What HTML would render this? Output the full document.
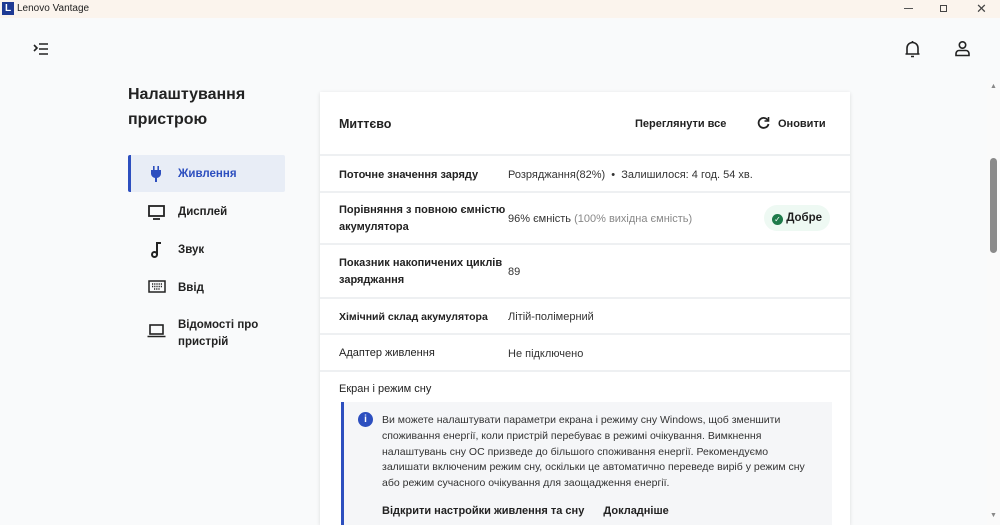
<!DOCTYPE html>
<html style="width:1000px;height:525px;overflow:hidden"><head><meta charset="utf-8"><style>
*{margin:0;padding:0;box-sizing:border-box}
body{width:1000px;height:525px;overflow:hidden;background:#f9fafb;font-family:"Liberation Sans","DejaVu Sans",sans-serif;color:#1f1f1f;position:relative}
.tb{position:absolute;top:0;left:0;width:1000px;height:18px;background:#fbf4ed;font-size:10px}
.abs{position:absolute}
.card{position:absolute;left:320px;top:92px;width:530px;height:433px;background:#fff;box-shadow:0 1px 4px rgba(0,0,0,.12);overflow:hidden}
.row{position:absolute;left:0;width:530px;border-top:2px solid #eef0f2;font-size:11px}
.lab{position:absolute;left:19px;font-weight:bold;color:#222;line-height:17px;font-size:11px}
.val{position:absolute;left:188px;color:#333}
.nav{position:absolute;left:150px;font-size:11.5px;font-weight:bold;color:#222}
</style></head><body>
<div class="tb">
<div class="abs" style="left:2px;top:2px;width:12px;height:13px;background:#1f3a93;color:#fff;font-size:10px;font-weight:bold;text-align:center;line-height:13px">L</div>
<div class="abs" style="left:17px;top:3px;color:#222">Lenovo Vantage</div>
<div class="abs" style="left:904px;top:8px;width:9px;height:1px;background:#555"></div>
<div class="abs" style="left:940px;top:5px;width:7px;height:7px;border:1px solid #444"></div>
<div class="abs" style="left:976px;top:1px;font-size:13px;color:#444">✕</div>
</div>
<svg class="abs" style="left:33px;top:42px" width="16" height="14" viewBox="0 0 16 14" fill="none" stroke="#222" stroke-width="1.6"><path d="M1 3l3 3-3 3M6 2h9M6 7h9M6 12h9"/></svg>
<svg class="abs" style="left:904px;top:40px" width="17" height="18" viewBox="0 0 17 18" fill="none" stroke="#222" stroke-width="1.6"><path d="M3 14V8a5.5 5.5 0 0111 0v6M1.5 14h14M7 16.5h3M8.5 1v1.5"/></svg>
<svg class="abs" style="left:954px;top:40px" width="17" height="17" viewBox="0 0 17 17" fill="none" stroke="#222" stroke-width="1.6"><circle cx="8.5" cy="5" r="3.2"/><path d="M2 15.5v-2a3 3 0 013-3h7a3 3 0 013 3v2z"/></svg>
<div class="abs" style="left:128px;top:82px;font-size:16px;line-height:25px;font-weight:bold;color:#222">Налаштування<br>пристрою</div>
<div class="abs" style="left:128px;top:155px;width:157px;height:37px;background:#e8edf6;border-left:3px solid #2d4fbf;border-radius:2px"></div>
<svg class="abs" style="left:150px;top:166px" width="12" height="16" viewBox="0 0 12 16" fill="#2d4fbf"><rect x="3" y="0" width="1.6" height="4"/><rect x="7.4" y="0" width="1.6" height="4"/><path d="M1 4h10v4a5 5 0 01-4 4v4H5v-4A5 5 0 011 8z"/></svg>
<div class="nav" style="left:178px;top:168px;color:#2d4fbf">Живлення</div>
<svg class="abs" style="left:148px;top:205px" width="17" height="15" viewBox="0 0 17 15" fill="none" stroke="#222" stroke-width="1.8"><rect x="1" y="1" width="15" height="10"/><path d="M5 14h7"/></svg>
<div class="nav" style="left:178px;top:206px">Дисплей</div>
<svg class="abs" style="left:151px;top:241px" width="12" height="17" viewBox="0 0 12 17" fill="none" stroke="#222" stroke-width="2"><path d="M6 14V2h4"/><circle cx="3.5" cy="13.5" r="2.5"/></svg>
<div class="nav" style="left:178px;top:244px">Звук</div>
<svg class="abs" style="left:148px;top:280px" width="18" height="13" viewBox="0 0 18 13" fill="none" stroke="#222" stroke-width="1.5"><rect x="1" y="1" width="16" height="11"/><path d="M4 4h10M4 6.5h10M6 9h6" stroke-dasharray="1.2 1"/></svg>
<div class="nav" style="left:178px;top:282px">Ввід</div>
<svg class="abs" style="left:147px;top:324px" width="19" height="14" viewBox="0 0 19 14" fill="none" stroke="#222" stroke-width="1.6"><rect x="3" y="1" width="13" height="9"/><path d="M0.5 12.5h18"/></svg>
<div class="nav" style="left:178px;top:317px;line-height:17px">Відомості про<br>пристрій</div>
<div class="card">
<div class="abs" style="left:19px;top:25px;font-size:12.5px;font-weight:bold;color:#222">Миттєво</div>
<div class="abs" style="left:315px;top:26px;font-size:11px;font-weight:bold;color:#222">Переглянути все</div>
<svg class="abs" style="left:437px;top:24px" width="13" height="13" viewBox="0 0 13 13" fill="none" stroke="#222" stroke-width="1.8"><path d="M11 4.5A5 5 0 1 0 11.5 8"/><path d="M11.5 1v4h-4" stroke-width="1.6"/></svg>
<div class="abs" style="left:458px;top:26px;font-size:11px;font-weight:bold;color:#222">Оновити</div>
<div class="row" style="top:62px;height:37px"><div class="lab" style="top:11px">Поточне значення заряду</div><div class="val" style="top:13px">Розряджання(82%) &nbsp;•&nbsp; Залишилося: 4 год. 54 хв.</div></div>
<div class="row" style="top:99px;height:52px"><div class="lab" style="top:9px">Порівняння з повною ємністю<br>акумулятора</div><div class="val" style="top:20px">96% ємність <span style="color:#888">(100% вихідна ємність)</span></div>
<div class="abs" style="left:444px;top:12px;width:66px;height:26px;border-radius:13px;background:#eef9f3;font-weight:bold;font-size:11.5px;line-height:26px;padding-left:8px"><span style="display:inline-block;width:11px;height:11px;border-radius:50%;background:#1e7a4a;color:#fff;font-size:8px;line-height:11px;text-align:center;vertical-align:-1px">✓</span> Добре</div></div>
<div class="row" style="top:151px;height:54px"><div class="lab" style="top:10px">Показник накопичених циклів<br>заряджання</div><div class="val" style="top:21px">89</div></div>
<div class="row" style="top:205px;height:36px"><div class="lab" style="top:10px;font-size:10.5px">Хімічний склад акумулятора</div><div class="val" style="top:12px">Літій-полімерний</div></div>
<div class="row" style="top:241px;height:37px"><div class="lab" style="top:10px;font-weight:normal;color:#222">Адаптер живлення</div><div class="val" style="top:13px">Не підключено</div></div>
<div class="row" style="top:278px;height:200px"><div class="lab" style="top:9px;font-weight:normal">Екран і режим сну</div>
<div class="abs" style="left:21px;top:30px;width:491px;height:140px;background:#f5f6f8;border-left:3px solid #2d4fbf">
<div class="abs" style="left:14px;top:10px;width:15px;height:15px;border-radius:50%;background:#2d4fbf;color:#fff;font-size:10px;font-weight:bold;text-align:center;line-height:15px">i</div>
<div class="abs" style="left:38px;top:11px;width:436px;font-size:10.5px;line-height:15.8px;color:#333">Ви можете налаштувати параметри екрана і режиму сну Windows, щоб зменшити споживання енергії, коли пристрій перебуває в режимі очікування. Вимкнення налаштувань сну ОС призведе до більшого споживання енергії. Рекомендуємо залишати включеним режим сну, оскільки це автоматично переведе виріб у режим сну або режим сучасного очікування для заощадження енергії.</div>
<div class="abs" style="left:38px;top:103px;font-size:11px;font-weight:bold;color:#222">Відкрити настройки живлення та сну <span style="margin-left:16px">Докладніше</span></div>
</div></div>
</div>
<div class="abs" style="left:987px;top:80px;width:13px;height:445px;background:#fafafa"></div>
<div class="abs" style="left:990px;top:83px;font-size:7px;color:#888">▲</div>
<div class="abs" style="left:990px;top:158px;width:7px;height:95px;border-radius:4px;background:#8a8a8a"></div>
<div class="abs" style="left:990px;top:512px;font-size:7px;color:#888">▼</div>
</body></html>
